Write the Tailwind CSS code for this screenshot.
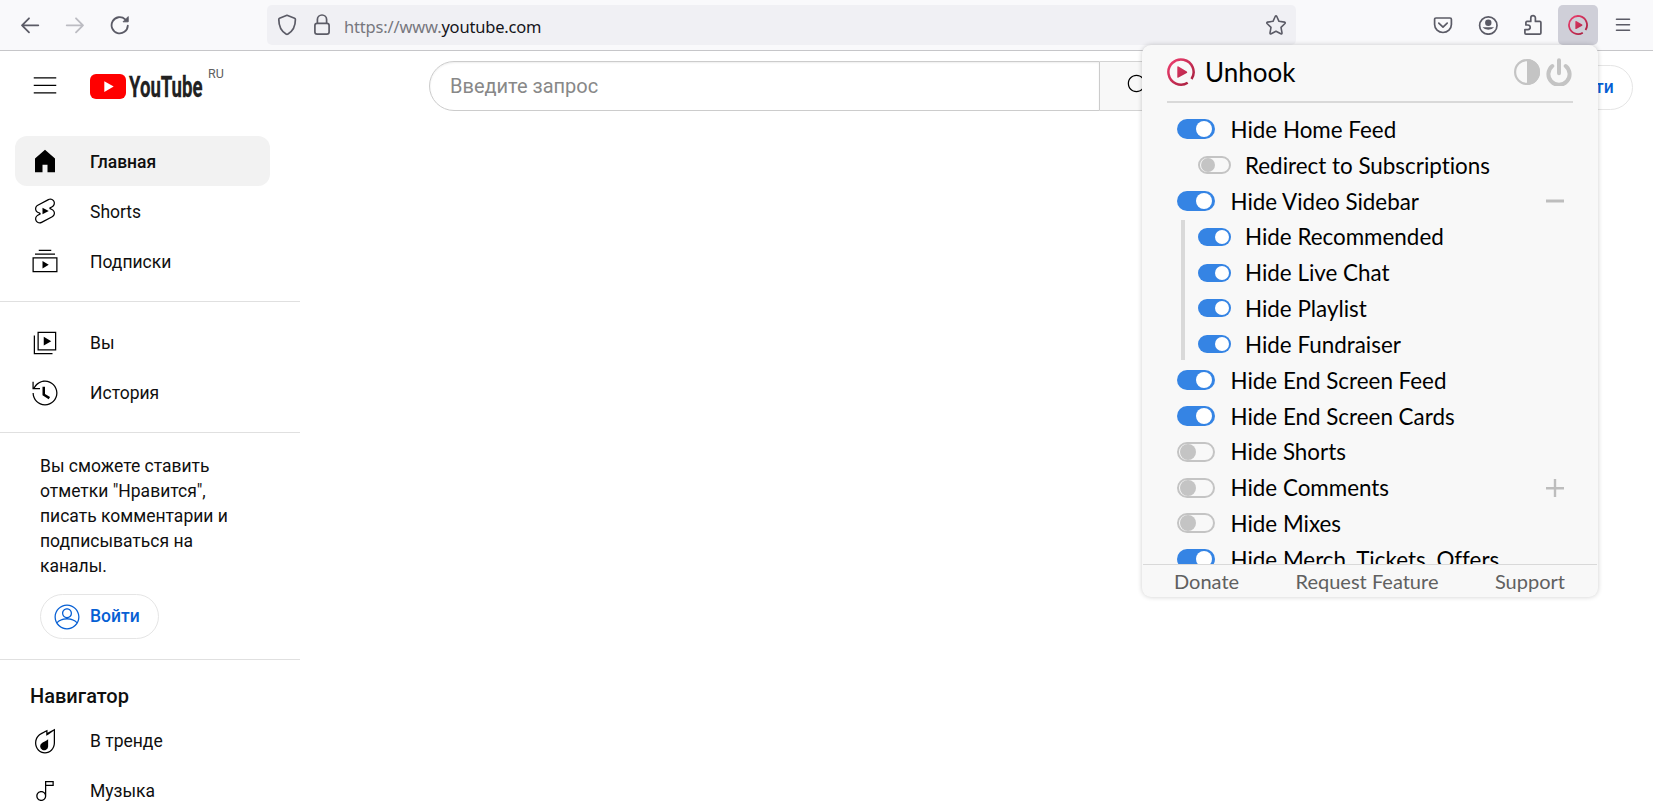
<!DOCTYPE html>
<html lang="ru">
<head>
<meta charset="utf-8">
<title>YouTube</title>
<script src="https://cdn.jsdelivr.net/npm/@tailwindcss/browser@4"></script>
</head>
<body class="relative h-[807px] w-[1653px] overflow-hidden bg-white font-['Roboto',sans-serif] text-[17.5px] text-[#0f0f0f]">
<svg class="absolute size-0">
  <defs>
    <linearGradient id="pink" gradientUnits="userSpaceOnUse" x1="3" y1="3" x2="25" y2="25"><stop offset="0" stop-color="#ea3d6d"/><stop offset="1" stop-color="#a8203f"/></linearGradient>
    <symbol id="unhook" viewBox="0 0 28 28">
      <path d="M20.700 24.700A12.600 12.600 0 1 1 24.500 21" fill="none" stroke="url(#pink)" stroke-width="2.500"/>
      <path d="M10.300 9.200v9.700q0 1.200 1.200.7l8.300-4.600q1-.9 0-1.600l-8.300-4.900q-1.200-.5-1.200.7z" fill="url(#pink)"/>
    </symbol>
    <symbol id="user" viewBox="0 0 24 24"><path d="M12 2C6.480 2 2 6.480 2 12s4.480 10 10 10 10-4.480 10-10S17.520 2 12 2zM12 3c4.960 0 9 4.040 9 9 0 1.420-.34 2.760-.93 3.960-1.530-1.720-3.980-2.890-7.380-3.030A3.990 3.990 0 0 0 16 9c0-2.210-1.790-4-4-4S8 6.790 8 9c0 1.970 1.430 3.600 3.310 3.930-3.400.14-5.850 1.310-7.380 3.030C3.340 14.760 3 13.420 3 12c0-4.960 4.040-9 9-9zM9 9c0-1.650 1.350-3 3-3s3 1.350 3 3-1.350 3-3 3-3-1.350-3-3zm3 12c-3.160 0-5.940-1.640-7.550-4.120C6.010 14.930 8.610 13.900 12 13.900c3.390 0 5.990 1.030 7.550 2.980C17.940 19.360 15.160 21 12 21z"/></symbol>
  </defs>
</svg>

<!-- Browser toolbar -->
<header class="flex h-[51px] items-start border-b border-[#c6c6c9] bg-[#f9f9fb] text-[#5b5b66]">
  <div class="flex h-[50px] w-[267px] shrink-0 items-center gap-[25px] pl-5">
    <svg class="size-5" viewBox="0 0 20 20" fill="none" stroke="#5b5b66" stroke-width="1.8" stroke-linecap="round" stroke-linejoin="round"><path d="M18.300 10.300H2M9 3.300l-7 7 7 7"/></svg>
    <svg class="size-5" viewBox="0 0 20 20" fill="none" stroke="#bcbcc2" stroke-width="1.8" stroke-linecap="round" stroke-linejoin="round"><path d="M1.700 10.300H18M11 3.300l7 7-7 7"/></svg>
    <svg class="size-5" viewBox="0 0 20 20" fill="none" stroke="#5b5b66" stroke-width="1.8" stroke-linecap="round"><path d="M17.800 10.600A8.100 8.100 0 1 1 15.200 4.300"/><path d="M18.200 2v4.800h-4.800z" fill="#5b5b66" stroke-width="1" stroke-linejoin="round"/></svg>
  </div>
  <div class="mt-[5px] flex h-10 w-[1029px] shrink-0 items-center rounded-[5px] bg-[#f0f0f4] pl-[10px] pr-[9px]">
    <svg class="h-[22px] w-5" viewBox="0 0 20 22" fill="none" stroke="#5b5b66" stroke-width="1.7" stroke-linejoin="round"><path d="M10 1.300 17.600 4.300Q18.400 4.600 18.400 5.500C18.400 12.600 15 17.600 11 20Q10 20.600 9 20C5 17.600 1.800 12.600 1.800 5.500Q1.800 4.600 2.500 4.300z"/></svg>
    <svg class="ml-[17px] h-[22px] w-4" viewBox="0 0 16 22" fill="none" stroke="#5b5b66" stroke-width="1.7"><rect x=".9" y="9.300" width="14.200" height="10.800" rx="2.200"/><path d="M3.400 9.300V5.600a4.600 4.600 0 0 1 9.200 0v3.700"/></svg>
    <div class="ml-[14px] mt-[4px] whitespace-nowrap font-['Noto_Sans',sans-serif] text-[16.5px] leading-6 tracking-[-0.18px] text-[#77777e]">https://www.<span class="text-[#15141a]">youtube.com</span></div>
    <svg class="ml-auto size-[22px]" viewBox="0 0 22 22" fill="none" stroke="#5b5b66" stroke-width="1.6" stroke-linejoin="round"><path d="M10.200 2.500Q11 1.200 11.800 2.500L14 7.300 19.500 8.100Q20.700 8.500 20 9.500L16 13.400 17 18.900Q17 20.200 15.800 19.800L11 17.200 6.200 19.800Q5 20.200 5 18.900L6 13.400 2 9.500Q1.300 8.500 2.500 8.100L8 7.300z"/></svg>
  </div>
  <div class="flex h-[50px] flex-1 items-center pl-[137px]">
    <svg class="size-5" viewBox="0 0 20 20" fill="none" stroke="#5b5b66" stroke-width="1.7" stroke-linecap="round" stroke-linejoin="round"><path d="M3 3h14q1.400 0 1.400 1.400v5.200a8.400 7.900 0 0 1-16.800 0V4.400Q1.600 3 3 3zM5.800 8.200 10 12.200l4.200-4"/></svg>
    <svg class="ml-[25px] size-5" viewBox="0 0 20 20" fill="#5b5b66"><circle cx="10.300" cy="10.500" r="8.700" fill="none" stroke="#5b5b66" stroke-width="1.700"/><circle cx="10.300" cy="7.800" r="3.200"/><path d="M4.900 12.200h10.800q.4 0 .2.400a6.200 3.600 0 0 1-11.200 0q-.2-.4.2-.4z"/></svg>
    <svg class="ml-[26px] h-[22px] w-[19px]" viewBox="0 0 19 22" fill="none" stroke="#5b5b66" stroke-width="1.700" stroke-linejoin="round"><path d="M2 20.100h13.700q1.200 0 1.200-1.200V8.600q0-1.200-1.200-1.200H11.400V4a2.300 2.300 0 0 0-4.600 0v3.400H3Q1.900 7.400 1.900 8.600V11h2a2.100 2.100 0 0 1 0 4.600H.9v3.300q0 1.200 1.100 1.200z"/></svg>
    <div class="ml-[15px] flex size-10 items-center justify-center rounded-[5px] bg-[#cfcfd8]"><svg class="size-5"><use href="#unhook"/></svg></div>
    <svg class="ml-[17px] size-4" viewBox="0 0 16 16" stroke="#5b5b66" stroke-width="1.600" stroke-linecap="round"><path d="M1.500 2.200h13M1.500 7.800h13M1.500 13.300h13"/></svg>
  </div>
</header>

<!-- YouTube masthead -->
<div class="flex h-[70px] items-center pl-[30px] pr-5">
  <svg class="size-[30px]" viewBox="0 0 24 24"><path d="M21 6H3V5h18v1zm0 5H3v1h18v-1zm0 6H3v1h18v-1z"/></svg>
  <div class="flex w-[369px] items-start pl-[30px]">
    <svg class="h-[30px] w-[114px]" viewBox="0 0 114 30"><rect y="3" width="36" height="25" rx="6" fill="#f00"/><path d="M14.300 10.200v10.700l9.400-5.350z" fill="#fff"/><text x="39" y="26" font-family="Roboto" font-weight="700" font-size="29.500" textLength="73.500" lengthAdjust="spacingAndGlyphs" fill="#212121" stroke="#212121" stroke-width=".3">YouTube</text></svg>
    <span class="-mt-[5px] ml-1 text-[12.5px] leading-[15px] text-[#606060]">RU</span>
  </div>
  <div class="flex h-[50px] w-[671px] items-center rounded-l-full border border-[#ccc] pl-5 text-[20px] text-[#888] shadow-[inset_0_1px_2px_#eee]">Введите запрос</div>
  <div class="flex h-[50px] w-20 items-center rounded-r-full border border-l-0 border-[#d3d3d3] bg-[#f8f8f8] pl-6"><svg class="size-[30px]" viewBox="0 0 24 24"><path d="M20.870 20.170l-5.590-5.590C16.350 13.350 17 11.750 17 10c0-3.870-3.130-7-7-7s-7 3.130-7 7 3.130 7 7 7c1.750 0 3.350-.65 4.580-1.710l5.590 5.590.7-.71zM10 16c-3.310 0-6-2.690-6-6s2.690-6 6-6 6 2.690 6 6-2.690 6-6 6z"/></svg></div>
  <div class="ml-auto mt-[2px] flex h-[45px] w-[119px] items-center rounded-full border border-[#e5e5e5] pl-[11px] font-medium text-[#065fd4]"><svg class="mr-2 size-[30px] fill-[#065fd4]"><use href="#user"/></svg>Войти</div>
</div>

<!-- Guide -->
<nav class="w-[300px] pt-[15px]">
  <div class="border-b border-[#e0e0e0] px-[15px] pb-[15px]">
    <div class="flex h-[50px] w-[255px] items-center gap-[30px] rounded-[12px] bg-[#f2f2f2] pl-[15px] font-medium"><svg class="size-[30px]" viewBox="0 0 24 24"><path d="M4 10v11h6v-6h4v6h6V10l-8-7z"/></svg><span class="pt-[2px]">Главная</span></div>
    <div class="flex h-[50px] items-center gap-[30px] pl-[15px]"><svg class="size-[30px]" viewBox="0 0 24 24"><path d="M10 14.650v-5.300L15 12l-5 2.650zm7.770-4.330-1.200-.5L18 9.060c1.840-.96 2.530-3.230 1.560-5.060s-3.240-2.530-5.070-1.560L6 6.940c-1.290.68-2.070 2.040-2 3.490.07 1.420.93 2.670 2.220 3.250.03.010 1.200.5 1.200.5L6 14.930c-1.830.97-2.530 3.240-1.560 5.070.97 1.830 3.240 2.530 5.070 1.560l8.500-4.500c1.290-.68 2.060-2.040 1.990-3.490-.07-1.420-.94-2.680-2.230-3.250zm-.23 5.860-8.500 4.500c-1.340.71-3.010.2-3.720-1.140-.71-1.340-.2-3.010 1.140-3.720l2.040-1.080v-1.210l-.69-.28-1.110-.46c-.99-.41-1.650-1.350-1.700-2.410-.05-1.060.52-2.060 1.460-2.560l8.500-4.500c1.340-.71 3.010-.2 3.720 1.140.71 1.340.2 3.010-1.140 3.720L15.500 9.260v1.210l1.800.74c.99.41 1.650 1.350 1.700 2.410.05 1.060-.52 2.060-1.460 2.560z"/></svg><span class="pt-[2px]">Shorts</span></div>
    <div class="flex h-[50px] items-center gap-[30px] pl-[15px]"><svg class="size-[30px]" viewBox="0 0 24 24"><path d="M10 18v-6l5 3-5 3zm7-15H7v1h10V3zm3 3H4v1h16V6zm2 3H2v12h20V9zM3 10h18v10H3V10z"/></svg><span class="pt-[2px]">Подписки</span></div>
  </div>
  <div class="border-b border-[#e0e0e0] px-[15px] pb-[14px] pt-4">
    <div class="flex h-[50px] items-center gap-[30px] pl-[15px]"><svg class="size-[30px]" viewBox="0 0 24 24"><path d="M11 7l6 3.500-6 3.500V7zm7 13H4V6H3v15h15v-1zm3-2H6V3h15v15zM7 17h13V4H7v13z"/></svg>Вы</div>
    <div class="flex h-[50px] items-center gap-[30px] pl-[15px]"><svg class="size-[30px]" viewBox="0 0 24 24"><path d="M14.970 16.950 10 13.870V7h2v5.760l4.030 2.490-1.060 1.700zM22 12c0 5.510-4.490 10-10 10S2 17.510 2 12h1c0 4.960 4.040 9 9 9s9-4.040 9-9-4.040-9-9-9C8.810 3 5.920 4.640 4.280 7.380c-.11.18-.22.37-.31.56L3.940 8H8v1H1.960V3h1v4.740c.04-.09.07-.17.11-.25.11-.22.23-.42.350-.63C5.220 3.860 8.510 2 12 2c5.510 0 10 4.490 10 10z"/></svg>История</div>
  </div>
  <div class="border-b border-[#e0e0e0] pb-5 pl-10 pt-[21px]">
    <p class="leading-[25px]">Вы сможете ставить<br>отметки "Нравится",<br>писать комментарии и<br>подписываться на<br>каналы.</p>
    <div class="mt-[15px] flex h-[45px] w-[119px] items-center rounded-full border border-[#e5e5e5] pl-[11px] font-medium text-[#065fd4]"><svg class="mr-2 size-[30px] fill-[#065fd4]"><use href="#user"/></svg>Войти</div>
  </div>
  <div class="px-[15px] pt-[15px]">
    <div class="flex h-[41px] items-center pl-[15px] text-[20px] font-medium">Навигатор</div>
    <div class="flex h-[50px] items-center gap-[30px] pl-[15px]"><svg class="-mt-px size-[30px]" viewBox="0 0 24 24"><path d="M19 3.870v9.770C19 17.700 15.860 21 12 21s-7-3.300-7-7.370v-.13c0-1.060.22-2.130.62-3.090.5-1.190 1.290-2.210 2.270-2.970.85-.66 1.830-1.140 2.870-1.650.39-.19.77-.38 1.150-.58.36-.19.72-.38 1.080-.56v3.220l1.550-.86L19 3.870M20 2.180l-6 3.240V3c-.55.29-1.100.58-1.650.87-.36.19-.73.38-1.090.57-1.380.71-2.780 1.310-3.990 2.250-1.110.86-2 2.020-2.570 3.370C4.250 11.140 4 12.330 4 13.500v.14C4 18.260 7.580 22 12 22s8-3.740 8-8.360V2.180z" fill-rule="evenodd"/><path d="M14.500 10.600v5.700a3.200 3.200 0 1 1-4.900-2.800c.8-.5 3.300-1.300 4.900-2.900z"/></svg>В тренде</div>
    <div class="flex h-[50px] items-center gap-[30px] pl-[15px]"><svg class="-mt-px size-[30px]" viewBox="0 0 24 24"><path fill-rule="evenodd" d="M12 4v9.380c-.73-.84-1.800-1.380-3-1.380-2.210 0-4 1.790-4 4s1.790 4 4 4 4-1.790 4-4V8h6V4h-7zM9 19c-1.660 0-3-1.340-3-3s1.340-3 3-3 3 1.340 3 3-1.340 3-3 3zm9-12h-5V5h5v2z"/></svg>Музыка</div>
  </div>
</nav>

<!-- Extension popup -->
<section class="absolute left-[1142px] top-[45px] flex h-[552px] w-[456px] flex-col overflow-hidden rounded-[9px] bg-[#f8f8f8] font-['Lato',sans-serif] text-[22.4px] text-black shadow-[0_0_5px_rgba(0,0,0,0.2)] [font-variant-ligatures:none]">
  <div class="mx-[25px] flex h-[58px] shrink-0 items-center border-b-2 border-[#d9d9d9] pb-[2px] pr-px">
    <svg class="size-7"><use href="#unhook"/></svg>
    <span class="ml-[10px] text-[26px]">Unhook</span>
    <svg class="ml-auto size-[26px]" viewBox="0 0 26 26"><circle cx="13" cy="13" r="11.900" fill="none" stroke="#c4c4c4" stroke-width="2.200"/><path d="M13 0a13 13 0 0 1 0 26z" fill="#c4c4c4"/></svg>
    <svg class="ml-[6px] h-7 w-[26px]" viewBox="0 0 26 28" fill="none" stroke="#c4c4c4" stroke-width="4" stroke-linecap="round"><path d="M13 2.200v13M6.300 8a10.600 10.600 0 1 0 13.400 0"/></svg>
  </div>
  <div id="list" class="min-h-0 flex-1 overflow-hidden pl-[35px] pt-[8.4px]"></div>
  <footer class="mx-px flex h-[33px] shrink-0 items-center justify-between border-t border-[#d9d9d9] pl-[31px] pr-[32px] text-[20px] text-[#606060]"><span>Donate</span><span>Request Feature</span><span>Support</span></footer>
</section>

<script>
const rows = [
  ['Hide Home Feed', 1, 0], ['Redirect to Subscriptions', 0, 1], ['Hide Video Sidebar', 1, 0, 'minus'],
  ['Hide Recommended', 1, 2], ['Hide Live Chat', 1, 1], ['Hide Playlist', 1, 1], ['Hide Fundraiser', 1, 1],
  ['Hide End Screen Feed', 1, 0], ['Hide End Screen Cards', 1, 0], ['Hide Shorts', 0, 0],
  ['Hide Comments', 0, 0, 'plus'], ['Hide Mixes', 0, 0], ['Hide Merch, Tickets, Offers', 1, 0]];
const mark = {
  minus: '<svg class="ml-auto mr-[34px] size-[18px]" viewBox="0 0 18 18"><path d="M0 7.500h18v3H0z" fill="#bdbdbd"/></svg>',
  plus: '<svg class="ml-auto mr-[34px] size-[18px]" viewBox="0 0 18 18"><path d="M0 8h18v2.400H0zM7.800 0h2.400v18H7.800z" fill="#bdbdbd"/></svg>'};
document.getElementById('list').innerHTML = rows.map(([label, on, level, icon]) => {
  const track = level ? 'h-[18px] w-[33px]' : 'h-5 w-[38px]';
  const knob = level ? 'size-[14px]' : 'size-4';
  const state = on ? 'justify-end bg-[#3584e4] pr-px' : 'justify-start border-2 border-[#c4c4c4] pl-px';
  return `<div class="relative flex h-[35.83px] items-center ${level ? 'pl-[21px]' : ''}">
    ${level === 2 ? '<i class="absolute left-[4px] top-px h-[140px] w-1 bg-[#d9d9d9]"></i>' : ''}
    <span class="flex shrink-0 items-center rounded-full ${track} ${state}"><b class="rounded-full ${knob} ${on ? (level ? 'mr-px bg-white' : 'mr-[2px] bg-white') : 'bg-[#c4c4c4]'}"></b></span>
    <span class="whitespace-nowrap pt-px ${level ? 'ml-[14px]' : 'ml-[15.5px]'}">${label}</span>${icon ? mark[icon] : ''}</div>`;
}).join('');
</script>
</body>
</html>
